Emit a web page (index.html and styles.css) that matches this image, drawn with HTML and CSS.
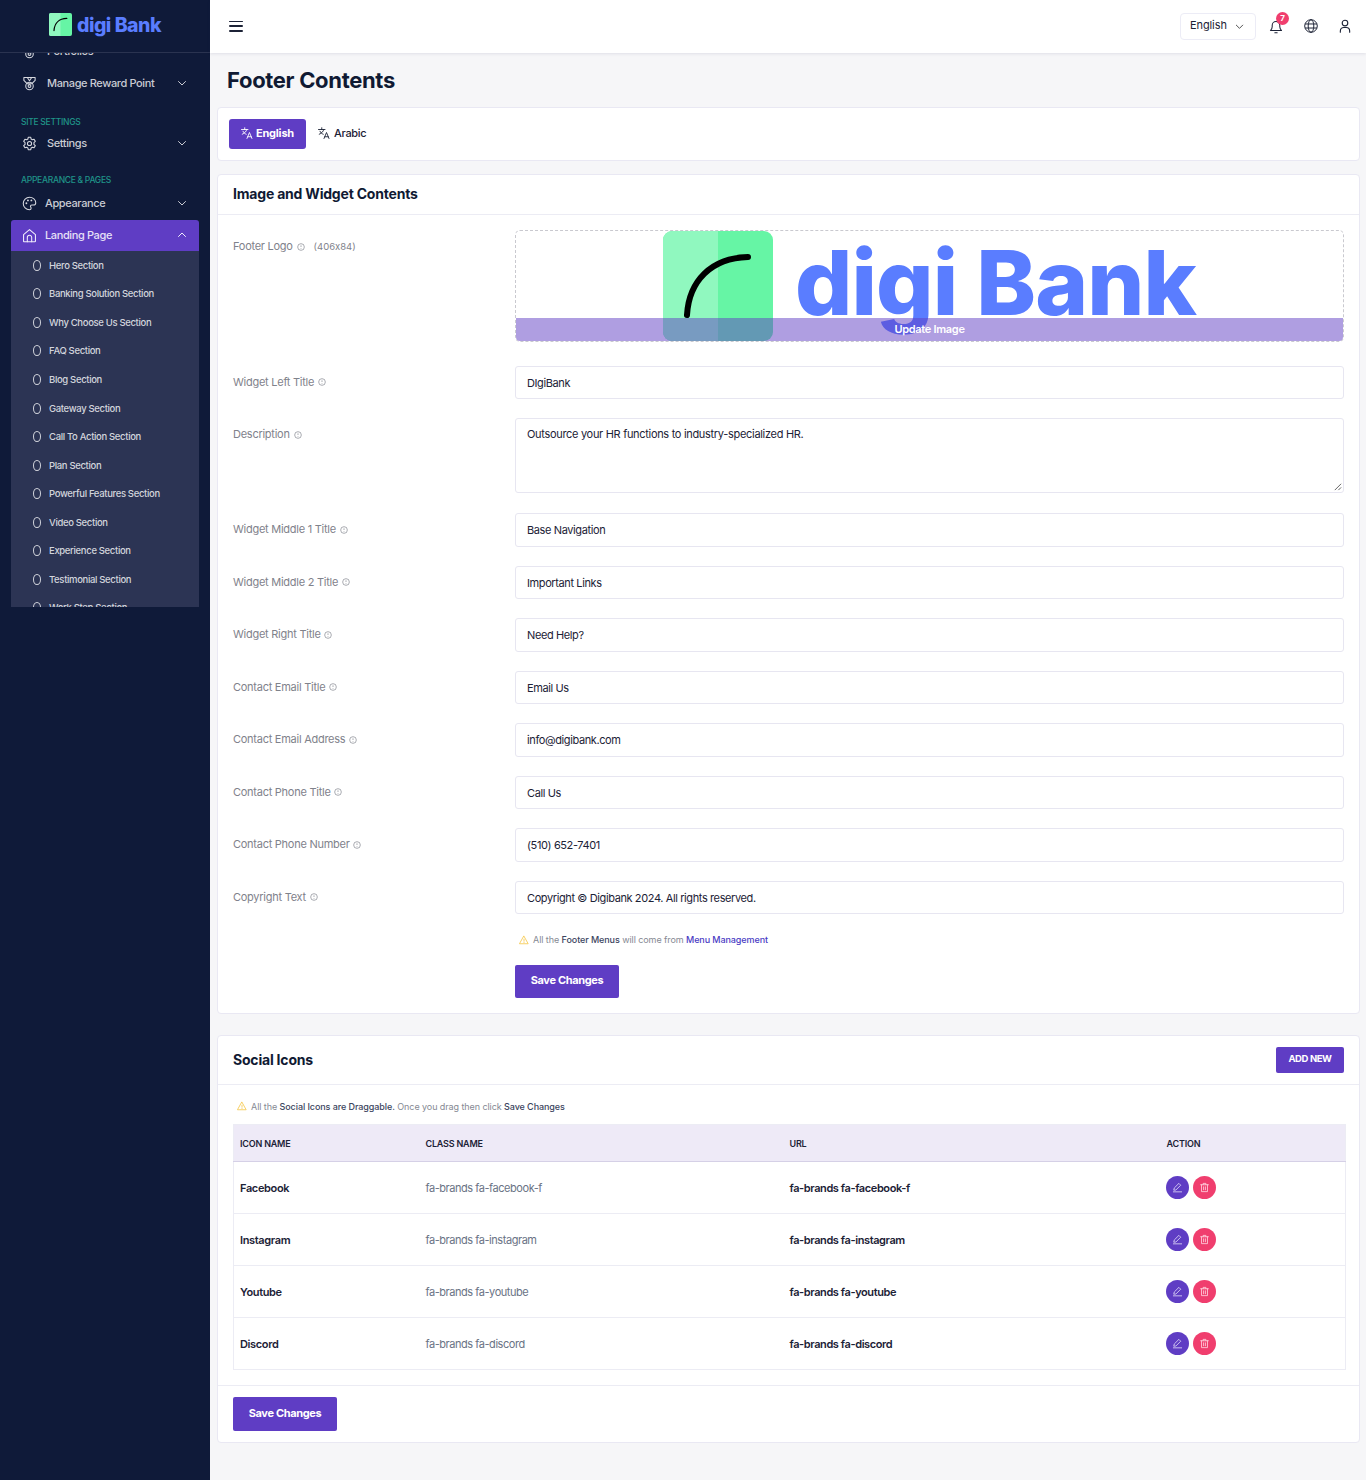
FILE: index.html
```html
<!DOCTYPE html>
<html lang="en">
<head>
<meta charset="utf-8">
<title>Footer Contents</title>
<link rel="stylesheet" href="styles.css">
</head>
<body>
<svg class="sprite" width="0" height="0" aria-hidden="true">
  <defs>
    <symbol id="i-logo" viewBox="0 0 110 110"><rect width="110" height="110" rx="9" fill="#66f5a5"/><path d="M9 0h46v110H9a9 9 0 0 1-9-9V9a9 9 0 0 1 9-9z" fill="#90f8bf"/><path d="M24 84C26 50 48 27 85 26" fill="none" stroke="#000" stroke-width="6" stroke-linecap="round"/></symbol>
    <symbol id="i-medal" viewBox="0 0 24 24"><g fill="none" stroke="currentColor" stroke-width="1.7" stroke-linejoin="round" stroke-linecap="round"><path d="M3 2.500h18v4.500l-5.500 5.500h-7L3 7z"/><path d="M8.500 2.500l3.500 5 3.500-5"/><circle cx="12" cy="16" r="6"/><circle cx="12" cy="16" r="2.200"/></g></symbol>
    <symbol id="i-gear" viewBox="0 0 24 24"><g fill="none" stroke="currentColor" stroke-width="1.7" stroke-linejoin="round"><path d="M10 2h4l.6 2.900 1.900 1.100 2.800-.9 2 3.500-2.200 2v2.800l2.200 2-2 3.500-2.800-.9-1.900 1.100L14 22h-4l-.6-2.900-1.900-1.100-2.800.9-2-3.500 2.200-2v-2.800l-2.200-2 2-3.500 2.800.9 1.900-1.100z"/><circle cx="12" cy="12" r="3.300"/></g></symbol>
    <symbol id="i-palette" viewBox="0 0 24 24"><path d="M12 2a10 10 0 1 0 0 20c1.700 0 2.600-1.100 2.600-2.400 0-1.600-1.100-2-1.100-3.200 0-1.100.9-2 2.200-2h2.600c2.500 0 3.700-1.700 3.700-3.800C22 5.800 17.500 2 12 2z" fill="none" stroke="currentColor" stroke-width="1.700" stroke-linejoin="round"/><g fill="currentColor"><circle cx="7" cy="11.500" r="1.500"/><circle cx="9.500" cy="7" r="1.500"/><circle cx="15" cy="7" r="1.500"/></g></symbol>
    <symbol id="i-home" viewBox="0 0 24 24"><g fill="none" stroke="currentColor" stroke-width="1.700" stroke-linejoin="round" stroke-linecap="round"><path d="M2.500 10.500L12 2.500l9.500 8V21a1 1 0 0 1-1 1h-17a1 1 0 0 1-1-1z"/><path d="M8.500 22v-7a3.500 3.500 0 0 1 7 0v7"/></g></symbol>
    <symbol id="i-down" viewBox="0 0 24 24"><path d="M5 9l7 7 7-7" fill="none" stroke="currentColor" stroke-width="2" stroke-linecap="round" stroke-linejoin="round"/></symbol>
    <symbol id="i-up" viewBox="0 0 24 24"><path d="M5 15l7-7 7 7" fill="none" stroke="currentColor" stroke-width="2" stroke-linecap="round" stroke-linejoin="round"/></symbol>
    <symbol id="i-bell" viewBox="0 0 24 24"><g fill="none" stroke="currentColor" stroke-width="1.800" stroke-linecap="round" stroke-linejoin="round"><path d="M2.500 18h19c-1.500-1.500-3-3-3-6.500V9a6.500 6.500 0 0 0-13 0v2.500C5.500 15 4 16.500 2.500 18z"/><path d="M10 22h4"/></g></symbol>
    <symbol id="i-globe" viewBox="0 0 24 24"><g fill="none" stroke="currentColor" stroke-width="1.700"><circle cx="12" cy="12" r="10.800"/><ellipse cx="12" cy="12" rx="4.800" ry="10.800"/><path d="M1.800 8.500h20.400M1.800 15.500h20.400"/></g></symbol>
    <symbol id="i-user" viewBox="0 0 24 24"><g fill="none" stroke="currentColor" stroke-width="1.900" stroke-linecap="round"><circle cx="12" cy="7" r="4.800"/><path d="M4 22.500v-2a6 6 0 0 1 6-6h4a6 6 0 0 1 6 6v2"/></g></symbol>
    <symbol id="i-lang" viewBox="0 0 24 24"><g fill="none" stroke="currentColor" stroke-width="1.800" stroke-linecap="round" stroke-linejoin="round"><path d="M1 5h13M7.500 1.500V5M11.500 5c-.8 3.800-3.800 7.500-9 9.500M4 8.500c1.200 2.700 3.300 4.800 6.500 6"/><path d="M12 23l5-12 5 12M13.500 19.500h7"/></g></symbol>
    <symbol id="i-info" viewBox="0 0 24 24"><g fill="none" stroke="currentColor" stroke-width="2.200"><circle cx="12" cy="12" r="10"/><path d="M12 7v5M12 15v2"/></g></symbol>
    <symbol id="i-warn" viewBox="0 0 24 24"><g fill="none" stroke="#f5c84b" stroke-width="2" stroke-linejoin="round" stroke-linecap="round"><path d="M12 3L22 21H2z"/><path d="M12 10v5M12 18v.2"/></g></symbol>
    <symbol id="i-pen" viewBox="0 0 24 24"><g fill="none" stroke="currentColor" stroke-width="1.700" stroke-linecap="round" stroke-linejoin="round"><path d="M4 17l1-4L15 3l4 4L9 17z"/><path d="M3 21.500h18"/></g></symbol>
    <symbol id="i-trash" viewBox="0 0 24 24"><g fill="none" stroke="currentColor" stroke-width="1.800" stroke-linecap="round" stroke-linejoin="round"><path d="M3.500 6h17M9 6V3h6v3M5.500 6v15h13V6M10 10.500v6.500M14 10.500v6.500"/></g></symbol>
  </defs>
</svg>

<div class="app">
  <aside class="sidebar">
    <div class="brand">
      <svg class="brand-mark"><use href="#i-logo"/></svg>
      <span class="brand-text">digi Bank</span>
    </div>
    <nav class="nav">
      <div class="nav-scroll">
        <a class="nav-item"><svg class="nav-icon"><use href="#i-medal"/></svg><span class="nav-text">Portfolios</span></a>
        <a class="nav-item"><svg class="nav-icon"><use href="#i-medal"/></svg><span class="nav-text">Manage Reward Point</span><svg class="nav-chev"><use href="#i-down"/></svg></a>
        <div class="nav-label label-low">SITE SETTINGS</div>
        <a class="nav-item"><svg class="nav-icon"><use href="#i-gear"/></svg><span class="nav-text">Settings</span><svg class="nav-chev"><use href="#i-down"/></svg></a>
        <div class="nav-label">APPEARANCE &amp; PAGES</div>
        <a class="nav-item nav-tight"><svg class="nav-icon"><use href="#i-palette"/></svg><span class="nav-text">Appearance</span><svg class="nav-chev"><use href="#i-down"/></svg></a>
        <a class="nav-item nav-tight nav-active"><svg class="nav-icon"><use href="#i-home"/></svg><span class="nav-text">Landing Page</span><svg class="nav-chev"><use href="#i-up"/></svg></a>
        <ul class="submenu">
          <li class="sub-item"><i class="sub-dot"></i>Hero Section</li>
          <li class="sub-item"><i class="sub-dot"></i>Banking Solution Section</li>
          <li class="sub-item"><i class="sub-dot"></i>Why Choose Us Section</li>
          <li class="sub-item"><i class="sub-dot"></i>FAQ Section</li>
          <li class="sub-item"><i class="sub-dot"></i>Blog Section</li>
          <li class="sub-item"><i class="sub-dot"></i>Gateway Section</li>
          <li class="sub-item"><i class="sub-dot"></i>Call To Action Section</li>
          <li class="sub-item"><i class="sub-dot"></i>Plan Section</li>
          <li class="sub-item"><i class="sub-dot"></i>Powerful Features Section</li>
          <li class="sub-item"><i class="sub-dot"></i>Video Section</li>
          <li class="sub-item"><i class="sub-dot"></i>Experience Section</li>
          <li class="sub-item"><i class="sub-dot"></i>Testimonial Section</li>
          <li class="sub-item"><i class="sub-dot"></i>Work Step Section</li>
        </ul>
      </div>
    </nav>
  </aside>

  <div class="main">
    <header class="topbar">
      <button class="burger" aria-label="Menu"><span></span><span></span><span></span></button>
      <div class="top-actions">
        <div class="lang-select">English<svg class="lang-chev"><use href="#i-down"/></svg></div>
        <div class="bell"><svg class="top-icon"><use href="#i-bell"/></svg><span class="badge">7</span></div>
        <svg class="top-icon icon-globe"><use href="#i-globe"/></svg>
        <svg class="top-icon icon-user"><use href="#i-user"/></svg>
      </div>
    </header>

    <main class="content">
      <h1 class="page-title">Footer Contents</h1>

      <section class="card tabs">
        <a class="tab tab-active"><svg class="tab-icon"><use href="#i-lang"/></svg>English</a>
        <a class="tab"><svg class="tab-icon"><use href="#i-lang"/></svg>Arabic</a>
      </section>

      <section class="card widget-card">
        <h2 class="card-head">Image and Widget Contents</h2>
        <form class="form">
          <div class="row row-logo">
            <label class="label">Footer Logo <svg class="info"><use href="#i-info"/></svg><span class="hint">(406x84)</span></label>
            <div class="upload">
              <svg class="upload-mark"><use href="#i-logo"/></svg>
              <span class="upload-text">digi Bank</span>
              <div class="upload-bar">Update Image</div>
            </div>
          </div>
          <div class="row"><label class="label">Widget Left Title <svg class="info"><use href="#i-info"/></svg></label><div class="input">DIgiBank</div></div>
          <div class="row row-area"><label class="label">Description <svg class="info"><use href="#i-info"/></svg></label><div class="input textarea">Outsource your HR functions to industry-specialized HR.<svg class="grip" viewBox="0 0 10 10"><path d="M9 2L2 9M9 6L6 9" stroke="#555" stroke-width="1" fill="none"/></svg></div></div>
          <div class="row"><label class="label">Widget Middle 1 Title <svg class="info"><use href="#i-info"/></svg></label><div class="input">Base Navigation</div></div>
          <div class="row"><label class="label">Widget Middle 2 Title <svg class="info"><use href="#i-info"/></svg></label><div class="input">Important Links</div></div>
          <div class="row"><label class="label">Widget Right Title <svg class="info"><use href="#i-info"/></svg></label><div class="input">Need Help?</div></div>
          <div class="row"><label class="label">Contact Email Title <svg class="info"><use href="#i-info"/></svg></label><div class="input">Email Us</div></div>
          <div class="row"><label class="label">Contact Email Address <svg class="info"><use href="#i-info"/></svg></label><div class="input">info@digibank.com</div></div>
          <div class="row"><label class="label">Contact Phone Title <svg class="info"><use href="#i-info"/></svg></label><div class="input">Call Us</div></div>
          <div class="row"><label class="label">Contact Phone Number <svg class="info"><use href="#i-info"/></svg></label><div class="input">(510) 652-7401</div></div>
          <div class="row"><label class="label">Copyright Text <svg class="info"><use href="#i-info"/></svg></label><div class="input">Copyright © Digibank 2024. All rights reserved.</div></div>
          <div class="row row-note">
            <span></span>
            <div>
              <p class="note note-form"><svg class="warn"><use href="#i-warn"/></svg><span>All the <b>Footer Menus</b> will come from <a class="link">Menu Management</a></span></p>
              <button type="button" class="btn">Save Changes</button>
            </div>
          </div>
        </form>
      </section>

      <section class="card social-card">
        <div class="card-head head-flex"><h2 class="head-title">Social Icons</h2><button class="btn btn-small">ADD NEW</button></div>
        <div class="social-body">
          <p class="note note-social"><svg class="warn"><use href="#i-warn"/></svg><span>All the <b>Social Icons are Draggable.</b> Once you drag then click <b>Save Changes</b></span></p>
          <table class="table">
            <colgroup><col class="c1"><col class="c2"><col class="c3"><col class="c4"></colgroup>
            <thead><tr><th>ICON NAME</th><th>CLASS NAME</th><th>URL</th><th>ACTION</th></tr></thead>
            <tbody>
              <tr><td class="strong">Facebook</td><td class="muted">fa-brands fa-facebook-f</td><td class="strong">fa-brands fa-facebook-f</td><td><div class="actions"><a class="round purple"><svg><use href="#i-pen"/></svg></a><a class="round pink"><svg><use href="#i-trash"/></svg></a></div></td></tr>
              <tr><td class="strong">Instagram</td><td class="muted">fa-brands fa-instagram</td><td class="strong">fa-brands fa-instagram</td><td><div class="actions"><a class="round purple"><svg><use href="#i-pen"/></svg></a><a class="round pink"><svg><use href="#i-trash"/></svg></a></div></td></tr>
              <tr><td class="strong">Youtube</td><td class="muted">fa-brands fa-youtube</td><td class="strong">fa-brands fa-youtube</td><td><div class="actions"><a class="round purple"><svg><use href="#i-pen"/></svg></a><a class="round pink"><svg><use href="#i-trash"/></svg></a></div></td></tr>
              <tr><td class="strong">Discord</td><td class="muted">fa-brands fa-discord</td><td class="strong">fa-brands fa-discord</td><td><div class="actions"><a class="round purple"><svg><use href="#i-pen"/></svg></a><a class="round pink"><svg><use href="#i-trash"/></svg></a></div></td></tr>
            </tbody>
          </table>
        </div>
        <div class="card-foot"><button class="btn">Save Changes</button></div>
      </section>
    </main>
  </div>
</div>
</body>
</html>
```
FILE: styles.css
```css
* { box-sizing: border-box; }
html, body { margin: 0; padding: 0; }
body {
  font-family: Inter, "Liberation Sans", sans-serif;
  font-feature-settings: "calt" 0;
  color: #101a33;
  background: #f6f6f8;
  font-size: 11px;
}
.sprite { position: absolute; }
.app { display: flex; height: 1480px; overflow: hidden; }

/* Sidebar */
.sidebar { width: 210px; flex: none; background: #0f1a39; display: flex; flex-direction: column; }
.brand { height: 53px; flex: none; display: flex; align-items: center; justify-content: center; gap: 5px; border-bottom: 1px solid #2a3350; padding-bottom: 3px; }
.brand-mark { width: 23px; height: 23px; }
.brand-text { font-size: 19.5px; font-weight: 800; color: #5a7dff; letter-spacing: -0.5px; }
.nav { flex: none; height: 554px; overflow: hidden; }
.nav-scroll { margin-top: -18px; }
.nav-item { display: flex; align-items: center; height: 32px; padding: 0 22px 0 21.5px; color: #c9cbd3; font-size: 11px; font-weight: 500; letter-spacing: -0.38px; }
.nav-icon { width: 15px; height: 15px; flex: none; margin-right: 10.5px; color: #d6d8df; }
.nav-text { flex: 1; }
.nav-chev { width: 12px; height: 12px; flex: none; color: #c9cbd3; }
.nav-tight .nav-icon { margin-right: 8.5px; }
.nav-active { background: #5f3dc4; color: #e6e0f7; margin: 1px 11px 0; width: 188px; height: 31px; padding: 0 11px 1px 10.5px; border-radius: 3px 3px 0 0; }
.nav-active .nav-icon, .nav-active .nav-chev { color: #f1edfb; }
.nav-label { margin-top: 15px; height: 13px; line-height: 13px; padding-left: 21px; font-size: 8.5px; font-weight: 500; color: #1f9488; letter-spacing: -0.28px; }
.label-low { padding-top: 2px; line-height: 12px; }
.submenu { list-style: none; margin: 0 11px; padding: 0; background: #2c3454; height: 356px; overflow: hidden; }
.sub-item { display: flex; align-items: center; height: 28.55px; padding-left: 22px; font-size: 9.5px; font-weight: 500; color: #d2d4dc; letter-spacing: -0.34px; }
.sub-dot { width: 8px; height: 11px; border: 1px solid #d2d4dc; border-radius: 50%; margin-right: 8px; flex: none; }

/* Topbar */
.main { flex: 1; min-width: 0; display: flex; flex-direction: column; }
.topbar { height: 53px; flex: none; background: #fff; box-shadow: 0 1px 3px rgba(30, 30, 80, .1); display: flex; align-items: center; justify-content: space-between; padding: 0 14px 1px 19px; }
.burger { width: 14px; height: 11px; border: 0; padding: 0; background: none; display: flex; flex-direction: column; justify-content: space-between; }
.burger span { display: block; height: 1.5px; background: #1c2236; border-radius: 1px; }
.top-actions { display: flex; align-items: center; }
.lang-select { width: 76px; height: 27px; border: 1px solid #ececf6; border-radius: 4px; display: flex; align-items: center; justify-content: space-between; padding: 0 10px 2px 9px; font-size: 11px; color: #1c2236; letter-spacing: -0.1px; margin-right: 13px; }
.lang-chev { width: 11px; height: 11px; color: #444; margin-top: 2px; }
.top-icon { width: 14px; height: 14px; color: #1c2236; display: block; }
.bell { position: relative; margin-right: 21px; margin-top: 2px; }
.icon-globe { margin-right: 20px; }
.icon-user { width: 14px; height: 14px; }
.badge { position: absolute; top: -8px; left: 7px; width: 13px; height: 13px; background: #f03e6e; color: #fff; border-radius: 50%; font-size: 8px; font-weight: 700; line-height: 13px; text-align: center; }

/* Content */
.content { flex: 1; padding: 0 6px 0 7px; }
.page-title { margin: 0; height: 54px; line-height: 55px; padding-left: 10px; font-size: 22px; font-weight: 700; letter-spacing: -0.32px; color: #101a33; }
.card { background: #fff; border: 1px solid #e9e8f3; border-radius: 4px; }
.tabs { height: 54px; display: flex; align-items: center; gap: 0; padding: 0 11px; margin-bottom: 13px; }
.tab { display: flex; align-items: center; height: 30px; padding: 0 12px 2px; border-radius: 3px; font-size: 11px; font-weight: 500; color: #1c2236; letter-spacing: -0.3px; }
.tab-icon { width: 12px; height: 12px; margin-right: 4px; }
.tab-active { background: #5f3dc4; color: #fff; font-weight: 700; width: 77px; letter-spacing: -0.2px; }
.tab-active .tab-icon { margin-right: 3px; }
.widget-card { height: 840px; margin-bottom: 21px; }
.card-head { margin: 0; height: 40px; line-height: 38px; padding: 0 15px; border-bottom: 1px solid #ececf4; font-size: 14px; font-weight: 700; color: #101a33; letter-spacing: -0.2px; }

/* Form */
.form { padding: 15px 15px 0; }
.row { display: grid; grid-template-columns: 282px 829px; margin-bottom: 19px; }
.row-logo { margin-bottom: 23.6px; }
.row-area { margin-bottom: 20.1px; }
.label { padding-top: 9px; line-height: 14px; color: #7f828b; font-size: 11px; letter-spacing: -0.26px; }
.hint { margin-left: 9px; font-size: 9.5px; letter-spacing: 0; }
.info { width: 8px; height: 8px; margin-left: 1px; color: #8a8d96; vertical-align: -0.5px; }
.upload { position: relative; height: 112px; border: 1px dashed #c9c9cf; border-radius: 5px; display: flex; align-items: center; justify-content: center; gap: 22px; overflow: hidden; }
.upload-mark { width: 110px; height: 110px; flex: none; }
.upload-text { font-size: 90px; font-weight: 800; line-height: 1; color: #5a7dff; letter-spacing: -0.85px; margin-top: -7px; }
.upload-bar { position: absolute; left: 0; right: 0; bottom: 0; height: 23px; background: rgba(95, 61, 196, .5); color: #fff; font-size: 11px; font-weight: 600; text-align: center; line-height: 22px; letter-spacing: -0.3px; }
.input { position: relative; height: 33.5px; line-height: 33px; border: 1px solid #e7e6f1; border-radius: 3px; padding: 0 11px; background: #fff; font-size: 11px; color: #1c2236; letter-spacing: -0.39px; }
.textarea { height: 75px; line-height: 14px; padding-top: 8px; letter-spacing: -0.31px; }
.grip { position: absolute; right: 1px; bottom: 1px; width: 9px; height: 9px; }
.row-note { margin: -0.7px 0 0; }
.note { margin: 0; display: flex; align-items: center; font-size: 9px; color: #868993; letter-spacing: -0.08px; }
.note b { font-weight: 500; color: #3c4560; }
.note .link { color: #4a3cc4; font-weight: 500; }
.warn { width: 10px; height: 10px; margin-right: 4px; flex: none; }
.note-form { height: 14px; padding-left: 4px; margin-bottom: 18px; }
.btn { border: 0; background: #5f3dc4; color: #fff; border-radius: 2px; width: 104px; height: 33.5px; font-family: inherit; font-size: 11px; font-weight: 700; letter-spacing: -0.35px; padding: 0 0 2px; }
.btn-small { width: 68px; height: 26px; font-size: 9.5px; letter-spacing: -0.4px; }

/* Social */
.social-card { height: 408px; }
.head-flex { display: flex; align-items: center; justify-content: space-between; height: 49px; padding-bottom: 1px; }
.head-title { margin: 0; font-size: 14px; font-weight: 700; letter-spacing: -0.2px; }
.social-body { padding: 0 15px; }
.note-social { height: 14px; margin: 14px 0 11px; padding-left: 4px; }
.table { width: 100%; border-collapse: collapse; table-layout: fixed; border: 1px solid #ececf4; }
.c1 { width: 185px; } .c2 { width: 364px; } .c3 { width: 377px; } .c4 { width: 186px; }
.table th { height: 37px; background: #eeeaf7; border-bottom: 1px solid #d5d0e6; text-align: left; padding: 0 7px; font-size: 9px; font-weight: 600; color: #1c2236; letter-spacing: -0.2px; }
.table td { height: 52px; padding: 0 7px; border-bottom: 1px solid #ececf4; font-size: 11px; letter-spacing: -0.4px; }
.table th:first-child, .table td:first-child { padding-left: 6px; }
.table td:first-child { letter-spacing: -0.35px; }
.table td:last-child { padding-left: 6px; }
.table td.muted { letter-spacing: -0.45px; }
.strong { font-weight: 600; color: #1c2236; }
.muted { color: #6a7385; font-weight: 400; }
.actions { display: flex; gap: 4px; margin-top: 0.5px; }
.round { width: 23px; height: 23px; border-radius: 50%; display: flex; align-items: center; justify-content: center; color: #e9e4fb; }
.round svg { width: 11px; height: 11px; }
.purple { background: #5f3dc4; }
.pink { background: #f03e6e; color: #ffd5df; }
.card-foot { margin-top: 15px; border-top: 1px solid #ececf4; padding: 11px 15px; }
```
